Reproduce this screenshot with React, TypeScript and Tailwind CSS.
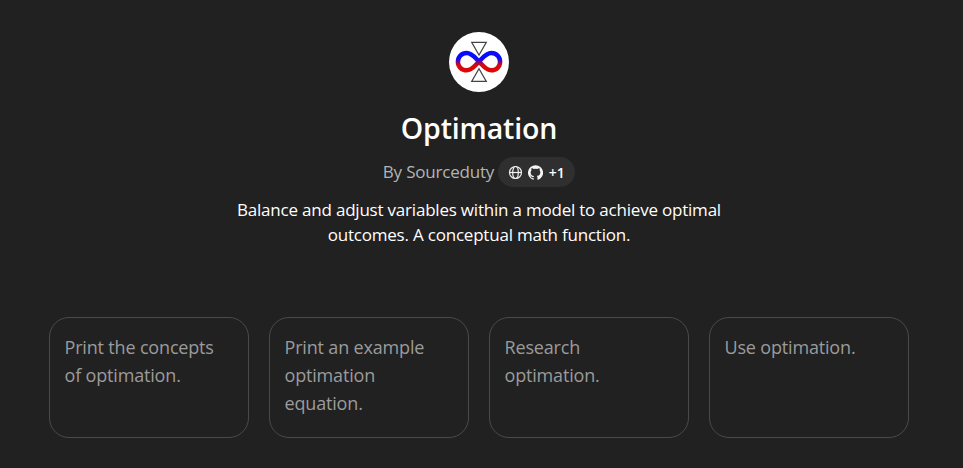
const starters = [
  ['Print the concepts', 'of optimation.'],
  ['Print an example', 'optimation', 'equation.'],
  ['Research', 'optimation.'],
  ['Use optimation.'],
];

function Logo() {
  return (
    <svg className="size-[60px] shrink-0" viewBox="0 0 60 60" fill="none">
      <defs>
        <linearGradient id="loop" x1="0" y1="18" x2="0" y2="41" gradientUnits="userSpaceOnUse">
          <stop offset="0.38" stopColor="#0a0aff" />
          <stop offset="0.66" stopColor="#dc0808" />
        </linearGradient>
      </defs>
      <circle cx="30" cy="30" r="30" fill="#fff" />
      <path d="M22.7 10.3H37.3L30 23Z" stroke="#444" strokeWidth="1.2" />
      <path d="M22.7 49.4H37.3L30 36.7Z" stroke="#444" strokeWidth="1.2" />
      <path
        d="M30 29.7C26.2 26 23 21.1 17.7 21.1C12.5 21.1 8.9 24.9 8.9 29.7C8.9 34.5 12.5 38.3 17.7 38.3C23 38.3 26.2 33.4 30 29.7C33.8 26 37 21.1 42.3 21.1C47.5 21.1 51.1 24.9 51.1 29.7C51.1 34.5 47.5 38.3 42.3 38.3C37 38.3 33.8 33.4 30 29.7Z"
        stroke="url(#loop)"
        strokeWidth="4.5"
      />
    </svg>
  );
}

function Globe() {
  return (
    <svg className="size-[15px]" viewBox="0 0 15 15" fill="none" stroke="#f0f0f0" strokeWidth="1.2">
      <circle cx="7.5" cy="7.5" r="6" />
      <ellipse cx="7.5" cy="7.5" rx="2.8" ry="6" />
      <path d="M1.5 7.5H13.5" />
    </svg>
  );
}

function Github() {
  return (
    <svg className="size-[15px]" viewBox="0 0 24 24" fill="#f4f4f4">
      <path d="M12 .3a12 12 0 0 0-3.8 23.4c.6.1.8-.3.8-.6v-2.2c-3.3.7-4-1.4-4-1.4-.6-1.4-1.4-1.8-1.4-1.8-1-.7.1-.7.1-.7 1.2 0 1.9 1.2 1.9 1.2 1 1.8 2.8 1.3 3.5 1 0-.8.4-1.3.7-1.6-2.7-.3-5.5-1.3-5.5-6 0-1.2.5-2.3 1.3-3.1-.2-.4-.6-1.6 0-3.2 0 0 1-.3 3.4 1.2a11.5 11.5 0 0 1 6 0c2.3-1.5 3.3-1.2 3.3-1.2.7 1.6.3 2.8.2 3.2.8.8 1.2 1.9 1.2 3.2 0 4.6-2.8 5.6-5.5 5.9.5.4.9 1.1.9 2.2v3.3c0 .3.1.7.8.6A12 12 0 0 0 12 .3" />
    </svg>
  );
}

export default function App() {
  return (
    <main className="flex h-[468px] w-[963px] flex-col items-center overflow-hidden bg-[#212121] pt-8 pr-[5px] font-['Open_Sans','Noto_Sans',sans-serif] text-white">
      <Logo />
      <h1 className="mt-4 text-[28.5px] leading-[40px] font-semibold tracking-[-0.15px] whitespace-nowrap">Optimation</h1>
      <div className="mt-[9px] flex h-[30px] items-center gap-1">
        <span className="text-[17px] tracking-[-0.2px] whitespace-nowrap text-[#b4b4b4]">By Sourceduty</span>
        <div className="flex h-[30px] w-[77px] items-center gap-[5px] rounded-full bg-[#2f2f2f] pl-[9.5px]">
          <Globe />
          <Github />
          <span className="ml-px text-[14px] font-semibold">+1</span>
        </div>
      </div>
      <p className="mt-[10px] text-center text-[17px] leading-[25px] tracking-[-0.21px] whitespace-nowrap">
        <span className="block">Balance and adjust variables within a model to achieve optimal</span>
        <span className="block">outcomes. A conceptual math function.</span>
      </p>
      <div className="mt-[70px] flex gap-5">
        {starters.map((lines) => (
          <button
            key={lines[0]}
            className="flex h-[121px] w-[200px] flex-col items-start rounded-[20px] border border-[#4a4a4a] px-[14.5px] pt-[15px] text-left text-[18px] leading-[28px] tracking-[-0.17px] whitespace-nowrap text-[#9b9b9b]"
          >
            {lines.map((line) => (
              <span key={line}>{line}</span>
            ))}
          </button>
        ))}
      </div>
    </main>
  );
}
